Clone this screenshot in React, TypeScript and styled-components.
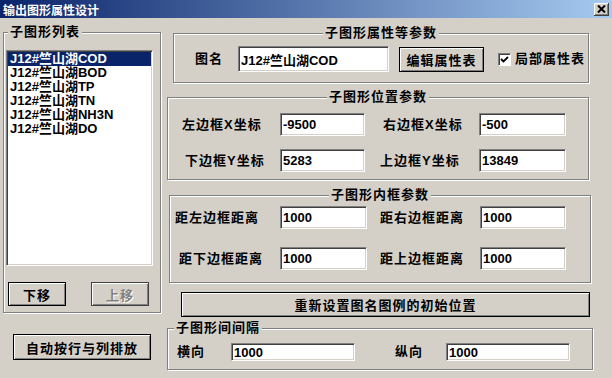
import React from "react"
import styled, { createGlobalStyle } from "styled-components"

const FACE = "#d4d0c8"
const CJK = `"Liberation Sans", "Noto Sans CJK SC", sans-serif`

const GlobalStyle = createGlobalStyle`
  html, body {
    margin: 0;
    padding: 0;
    background: ${FACE};
  }
  body {
    width: 612px;
    height: 378px;
    overflow: hidden;
    font-family: ${CJK};
  }
  * {
    box-sizing: border-box;
  }
`

const Window = styled.div`
  width: 612px;
  height: 378px;
  background: ${FACE};
  display: flex;
  flex-direction: column;
  overflow: hidden;
`

const TitleBar = styled.div`
  height: 18px;
  flex: none;
  display: flex;
  align-items: center;
  justify-content: space-between;
  padding: 0 3px;
  background: linear-gradient(to right, #0a246a, #a6caf0);
  color: #fff;
  font: bold 12px ${CJK};
`

const CloseButton = styled.div`
  width: 15px;
  height: 13px;
  background: ${FACE};
  box-shadow: inset -1px -1px #404040, inset 1px 1px #fff,
    inset -2px -2px #808080;
  display: flex;
  align-items: center;
  justify-content: center;
`

const Main = styled.div`
  flex: 1;
  display: flex;
`

const LeftColumn = styled.div`
  width: 165px;
  flex: none;
  display: flex;
  flex-direction: column;
  align-items: flex-start;
`

const RightColumn = styled.div`
  flex: 1;
  display: flex;
  flex-direction: column;
  align-items: flex-start;
`

const Group = styled.div<{ $w: number; $h: number; $mt: number; $ml: number }>`
  position: relative;
  width: ${(p) => p.$w}px;
  height: ${(p) => p.$h}px;
  margin: ${(p) => p.$mt}px 0 0 ${(p) => p.$ml}px;
  border: 1px solid #808080;
  box-shadow: inset 1px 1px #fff, 1px 1px #fff;
  flex: none;
`

const GroupTitle = styled.span<{ $left?: number }>`
  position: absolute;
  top: -9px;
  left: ${(p) => (p.$left === undefined ? "50%" : `${p.$left}px`)};
  transform: ${(p) => (p.$left === undefined ? "translateX(-50%)" : "none")};
  padding: 0 2px;
  background: ${FACE};
  font: bold 13px/16px ${CJK};
  letter-spacing: 1px;
  white-space: nowrap;
  color: #000;
`

const Label = styled.span<{ $w?: number; $pl?: number }>`
  display: inline-block;
  flex: none;
  width: ${(p) => (p.$w ? `${p.$w}px` : "auto")};
  padding-left: ${(p) => p.$pl || 0}px;
  font: bold 13px/16px ${CJK};
  letter-spacing: 1px;
  white-space: nowrap;
  color: #000;
`

const Field = styled.input<{ $w: number; $h: number }>`
  width: ${(p) => p.$w}px;
  height: ${(p) => p.$h}px;
  flex: none;
  margin: 0;
  padding: 0 2px;
  background: #fff;
  border-style: solid;
  border-width: 1px;
  border-color: #808080 #fff #fff #808080;
  box-shadow: inset 1px 1px #404040, inset -1px -1px ${FACE};
  font: bold 13px ${CJK};
  color: #000;
  outline: none;
`

const Button = styled.button<{ $w: number; $h: number; $ml?: number; $mt?: number }>`
  width: ${(p) => p.$w}px;
  height: ${(p) => p.$h}px;
  margin: ${(p) => p.$mt || 0}px 0 0 ${(p) => p.$ml || 0}px;
  flex: none;
  padding: 0;
  background: ${FACE};
  border: 1px solid #000;
  box-shadow: inset 1px 1px #fff, inset -1px -1px #808080;
  font: bold 13px ${CJK};
  letter-spacing: 1px;
  color: #000;

  &:disabled {
    color: #808080;
    text-shadow: 1px 1px #fff;
    border-color: #404040;
  }
`

const ListBox = styled.div`
  width: 147px;
  height: 216px;
  background: #fff;
  border-style: solid;
  border-width: 1px;
  border-color: #808080 #fff #fff #808080;
  box-shadow: inset 1px 1px #404040, inset -1px -1px ${FACE};
  padding: 1px 1px;
`

const ListItem = styled.div<{ $selected?: boolean }>`
  height: 14px;
  line-height: 14px;
  padding-left: 2px;
  font: bold 13px/14px ${CJK};
  white-space: nowrap;
  background: ${(p) => (p.$selected ? "#0a246a" : "transparent")};
  color: ${(p) => (p.$selected ? "#fff" : "#000")};
`

const ListPane = styled.div`
  padding: 17px 0 0 2px;
`

const MoveRow = styled.div`
  display: flex;
  justify-content: space-between;
  width: 147px;
  margin-top: 16px;
  padding: 0 4px 0 2px;
`

const PropRow = styled.div`
  display: flex;
  align-items: center;
  padding: 12px 0 0 21px;
  overflow: hidden;
`

const CheckBox = styled.span`
  width: 13px;
  height: 13px;
  flex: none;
  margin-left: 14px;
  margin-right: 4px;
  background: #fff;
  border-style: solid;
  border-width: 1px;
  border-color: #808080 #fff #fff #808080;
  box-shadow: inset 1px 1px #404040;
  display: flex;
  align-items: center;
  justify-content: center;
`

const ParamGrid = styled.div<{ $cols: string; $gap: number; $pt: number; $pl: number }>`
  display: grid;
  grid-template-columns: ${(p) => p.$cols};
  row-gap: ${(p) => p.$gap}px;
  align-items: center;
  padding: ${(p) => p.$pt}px 0 0 ${(p) => p.$pl}px;
`

const SpacingRow = styled.div`
  display: flex;
  align-items: center;
  padding: 14px 0 0 9px;
`

const listItems = ["COD", "BOD", "TP", "TN", "NH3N", "DO"]

export default function App() {
  return (
    <Window>
      <GlobalStyle />
      <TitleBar>
        <span>输出图形属性设计</span>
        <CloseButton>
          <svg width="9" height="8" viewBox="0 0 9 8">
            <path d="M1 0.5 L8 7.5 M8 0.5 L1 7.5" stroke="#000" strokeWidth="2" />
          </svg>
        </CloseButton>
      </TitleBar>
      <Main>
        <LeftColumn>
          <Group $w={158} $h={281} $mt={14} $ml={3}>
            <GroupTitle $left={4}>子图形列表</GroupTitle>
            <ListPane>
              <ListBox>
                {listItems.map((s, i) => (
                  <ListItem key={s} $selected={i === 0}>
                    J12#竺山湖{s}
                  </ListItem>
                ))}
              </ListBox>
              <MoveRow>
                <Button $w={58} $h={24}>下移</Button>
                <Button $w={58} $h={24} disabled>
                  上移
                </Button>
              </MoveRow>
            </ListPane>
          </Group>
          <Button $w={138} $h={26} $mt={21} $ml={13}>
            自动按行与列排放
          </Button>
        </LeftColumn>

        <RightColumn>
          <Group $w={416} $h={50} $mt={15} $ml={8}>
            <GroupTitle>子图形属性等参数</GroupTitle>
            <PropRow>
              <Label $w={43}>图名</Label>
              <Field $w={151} $h={26} value="J12#竺山湖COD" readOnly />
              <Button $w={85} $h={25} $ml={10}>
                编辑属性表
              </Button>
              <CheckBox>
                <svg width="9" height="9" viewBox="0 0 9 9">
                  <path d="M1 4 L3.5 6.5 L8 2" stroke="#000" strokeWidth="1.8" fill="none" />
                </svg>
              </CheckBox>
              <Label>局部属性表</Label>
            </PropRow>
          </Group>

          <Group $w={422} $h={83} $mt={14} $ml={2}>
            <GroupTitle>子图形位置参数</GroupTitle>
            <ParamGrid $cols="98px 85px 114px 87px" $gap={13} $pt={15} $pl={14}>
              <Label>左边框X坐标</Label>
              <Field $w={85} $h={23} value="-9500" readOnly />
              <Label $pl={18}>右边框X坐标</Label>
              <Field $w={87} $h={23} value="-500" readOnly />
              <Label $pl={3}>下边框Y坐标</Label>
              <Field $w={85} $h={23} value="5283" readOnly />
              <Label $pl={15}>上边框Y坐标</Label>
              <Field $w={87} $h={23} value="13849" readOnly />
            </ParamGrid>
          </Group>

          <Group $w={422} $h={88} $mt={15} $ml={4}>
            <GroupTitle>子图形内框参数</GroupTitle>
            <ParamGrid $cols="105px 87px 113px 86px" $gap={18} $pt={10} $pl={5}>
              <Label>距左边框距离</Label>
              <Field $w={87} $h={23} value="1000" readOnly />
              <Label $pl={13}>距右边框距离</Label>
              <Field $w={86} $h={23} value="1000" readOnly />
              <Label $pl={4}>距下边框距离</Label>
              <Field $w={87} $h={23} value="1000" readOnly />
              <Label $pl={13}>距上边框距离</Label>
              <Field $w={86} $h={23} value="1000" readOnly />
            </ParamGrid>
          </Group>

          <Button $w={409} $h={25} $mt={9} $ml={16}>
            重新设置图名图例的初始位置
          </Button>

          <Group $w={426} $h={42} $mt={11} $ml={2}>
            <GroupTitle $left={6}>子图形间间隔</GroupTitle>
            <SpacingRow>
              <Label $w={54}>横向</Label>
              <Field $w={124} $h={18} value="1000" readOnly />
              <Label $w={91} $pl={40}>纵向</Label>
              <Field $w={124} $h={18} value="1000" readOnly />
            </SpacingRow>
          </Group>
        </RightColumn>
      </Main>
    </Window>
  )
}
